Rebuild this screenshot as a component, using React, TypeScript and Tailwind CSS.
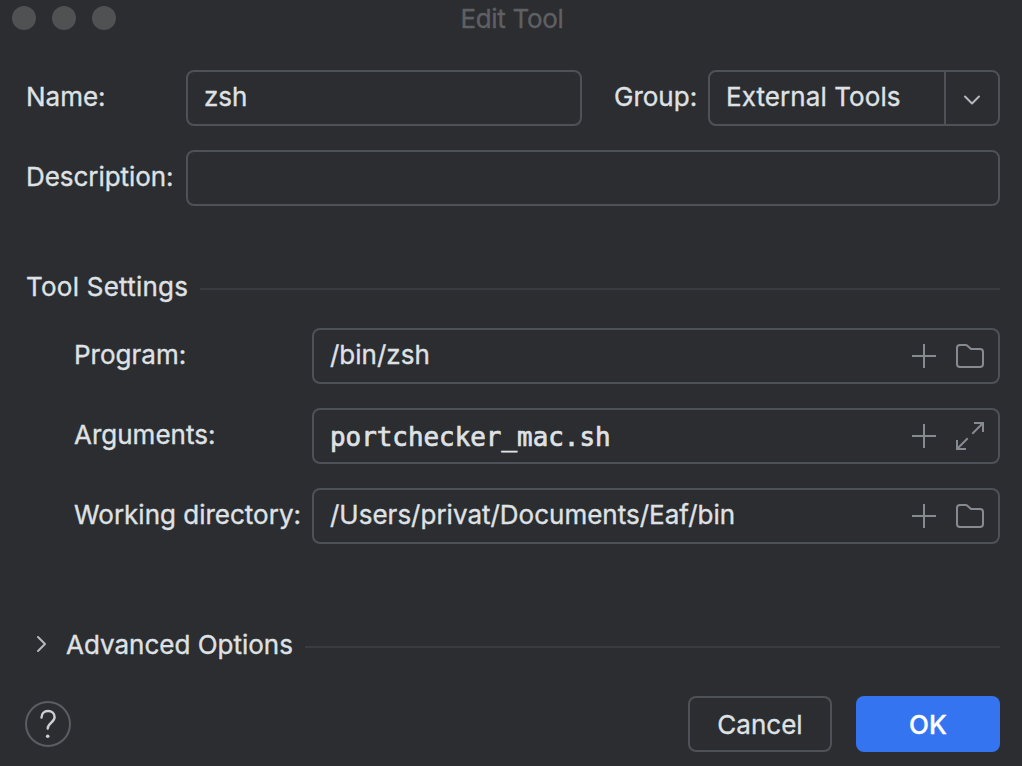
import React from "react";

const field = "box-border h-14 rounded-[8px] border-2 border-[#4e5157] flex items-center";

function Plus() {
  return (
    <svg width="28" height="28" viewBox="0 0 28 28" fill="none" stroke="#868a91" strokeWidth="2">
      <path d="M14 2v24M2 14h24" />
    </svg>
  );
}

function Folder() {
  return (
    <svg width="32" height="32" viewBox="0 0 32 32" fill="none" stroke="#868a91" strokeWidth="2" strokeLinejoin="round">
      <path d="M3 8a3 3 0 0 1 3-3h5.800a2 2 0 0 1 1.300.5L17 9h9a3 3 0 0 1 3 3v12a3 3 0 0 1-3 3H6a3 3 0 0 1-3-3z" />
    </svg>
  );
}

function Expand() {
  return (
    <svg width="32" height="32" viewBox="0 0 32 32" fill="none" stroke="#868a91" strokeWidth="2">
      <path d="M20 3h9v9M29 3L18.300 13.700M12 29H3v-9M3 29l10.700-10.700" />
    </svg>
  );
}

function PathRow({ label, value, mono, icon }: { label: string; value: string; mono?: boolean; icon: React.ReactNode }) {
  return (
    <div className="flex items-center">
      <div className="w-[238px] shrink-0 whitespace-nowrap pb-0.5">{label}</div>
      <div className={field + " flex-1 pl-4 pr-3"}>
        <span className={mono ? "flex-1 pt-0.5 font-['DejaVu_Sans_Mono',monospace] text-[25.900px] [-webkit-text-stroke:0.7px]" : "flex-1 pb-0.5"}>{value}</span>
        <Plus />
        <span className="ml-4">{icon}</span>
      </div>
    </div>
  );
}

export default function App() {
  return (
    <div className="flex h-[766px] w-[1022px] flex-col overflow-hidden bg-[#2b2d30] font-['Inter',sans-serif] text-[26px] leading-8 text-[#dfe1e5] [-webkit-text-stroke:0.35px]">
      <header className="relative flex h-[38px] shrink-0 items-center justify-center">
        <div className="absolute left-3 top-[6px] flex gap-4">
          <i className="size-6 rounded-full bg-[#505153]" />
          <i className="size-6 rounded-full bg-[#505153]" />
          <i className="size-6 rounded-full bg-[#505153]" />
        </div>
        <span className="pl-0.5 tracking-[-0.3px] text-[#5f6063]">Edit Tool</span>
      </header>
      <main className="flex flex-col pl-[26px] pr-[22px] pt-8">
        <div className="flex items-center">
          <div className="w-40 pb-0.5">Name:</div>
          <div className={field + " w-[396px] pl-4"}><span className="pb-0.5">zsh</span></div>
          <div className="w-[126px] pb-0.5 pl-8">Group:</div>
          <div className={field + " flex-1 pl-4"}>
            <span className="flex-1 pb-0.5 tracking-[0.08px]">External Tools</span>
            <span className="flex h-full w-[54px] items-center justify-center border-l-2 border-[#4e5157] pt-1">
              <svg width="20" height="12" viewBox="0 0 20 12" fill="none" stroke="#b4b8bf" strokeWidth="2" strokeLinecap="round" strokeLinejoin="round"><path d="M3 2.500l7 7 7-7" /></svg>
            </span>
          </div>
        </div>
        <div className="mt-6 flex items-center">
          <div className="w-40 pb-0.5 tracking-[-0.05px]">Description:</div>
          <div className={field + " flex-1"} />
        </div>
        <div className="mt-[65px] flex h-8 items-center">
          <span className="tracking-[0.24px]">Tool Settings</span><i className="ml-3 mt-1 h-0.5 flex-1 bg-[#393b40]" />
        </div>
        <div className="mt-[25px] flex flex-col gap-6 pl-12">
          <PathRow label="Program:" value="/bin/zsh" icon={<Folder />} />
          <PathRow label="Arguments:" value="portchecker_mac.sh" mono icon={<Expand />} />
          <PathRow label="Working directory:" value="/Users/privat/Documents/Eaf/bin" icon={<Folder />} />
        </div>
        <div className="mt-[85px] flex h-8 items-center">
          <svg className="mb-0.5 ml-2 mr-4" width="16" height="20" viewBox="0 0 16 20" fill="none" stroke="#b4b8bf" strokeWidth="2" strokeLinecap="round" strokeLinejoin="round"><path d="M4 3l7 7-7 7" /></svg>
          <span>Advanced Options</span><i className="ml-3 mt-1 h-0.5 flex-1 bg-[#393b40]" />
        </div>
      </main>
      <footer className="mt-[35px] flex items-center pl-6 pr-[22px]">
        <svg width="48" height="48" viewBox="0 0 48 48" fill="none">
          <circle cx="24" cy="24" r="22" stroke="#5a5d63" strokeWidth="2" />
          <path d="M17.500 17.500C17.500 13.500 20.200 11 24 11s6.600 2.400 6.600 6.200c0 5-6.900 6-6.900 11.300" stroke="#ced0d6" strokeWidth="2.400" strokeLinecap="round" />
          <circle cx="23.700" cy="36.300" r="1.800" fill="#ced0d6" />
        </svg>
        <button className="ml-auto h-14 w-36 rounded-[8px] border-2 border-[#4e5157] pt-0.5">Cancel</button>
        <button className="ml-6 h-14 w-36 rounded-[8px] bg-[#3574f0] pt-0.5 font-medium text-white">OK</button>
      </footer>
    </div>
  );
}
